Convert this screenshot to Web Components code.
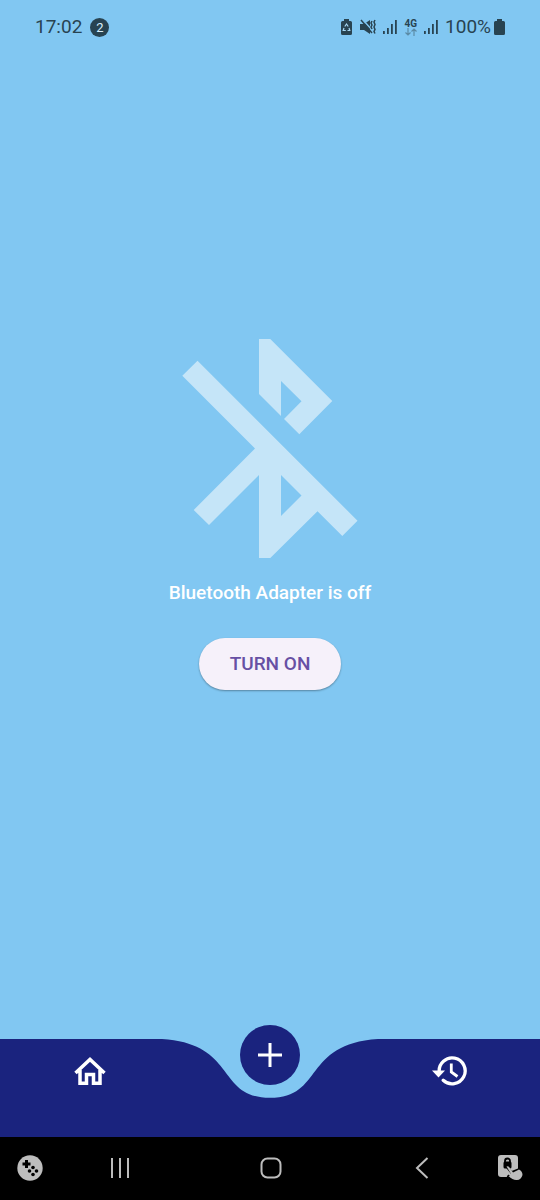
<!DOCTYPE html>
<html lang="en">
<head>
<meta charset="utf-8">
<meta name="viewport" content="width=device-width, initial-scale=1">
<title>Bluetooth</title>
<style>
html, body { margin: 0; }
body { background: #81c7f2; font-family: Roboto, sans-serif; }
</style>
</head>
<body>
<app-screen></app-screen>
<script>
const define = (name, html) => {
  const template = document.createElement('template');
  template.innerHTML = `<style>
    *, *::before { box-sizing: border-box; }
    svg { display: block; flex: none; }
    button { appearance: none; border: 0; margin: 0; padding: 0; background: none; font: inherit; color: inherit; cursor: pointer; }
  </style>` + html;
  customElements.define(name, class extends HTMLElement {
    constructor() {
      super();
      this.attachShadow({ mode: 'open' }).append(template.content.cloneNode(true));
    }
  });
};

define('signal-bars', `
  <style>:host { display: block; }</style>
  <svg width="14" height="14" fill="#284351" aria-hidden="true">
    <path d="M0 11h1.800v3H0zM4 8h1.800v6H4zM8 4h1.800v10H8zM12 0h1.800v14h-1.800z"/>
  </svg>`);

define('status-bar', `
  <style>
    :host { display: flex; align-items: center; justify-content: space-between; height: 54px; padding: 0 35px; color: #284351; font-size: 19px; line-height: 24px; }
    .group { display: flex; align-items: center; }
    .left { gap: 8px; }
    .count { display: grid; place-items: center; width: 19px; height: 19px; border-radius: 50%; background: #284351; color: #d9effc; font-size: 13px; line-height: 19px; }
    .right { gap: 7px; }
    .net { display: flex; flex-direction: column; align-items: center; font-size: 10px; font-weight: 700; line-height: 9px; }
    .power { display: flex; align-items: center; gap: 3px; }
    .modes { display: flex; align-items: center; gap: 8px; }
  </style>
  <div class="group left"><span>17:02</span><span class="count">2</span></div>
  <div class="group right">
    <span class="modes">
      <svg width="11" height="16" viewBox="0 0 11 16" aria-hidden="true">
        <path fill="#284351" d="M3 0h5v2h1.500q1.500 0 1.500 1.500v11q0 1.500-1.500 1.500h-8Q0 16 0 14.500v-11Q0 2 1.500 2H3z"/>
        <path fill="none" stroke="#a6d7f4" stroke-width="1.200" d="M3.800 7.500 5.500 5l1.700 2.500M8 9l.8 2.500H6.500M4.800 11.500H2.200L3 9"/>
      </svg>
      <svg width="16" height="16" viewBox="0 0 16 16" aria-hidden="true">
        <path fill="#284351" d="M0 5h4l6-4v14l-6-4H0z"/>
        <path d="M2 0l11 12" stroke="#81c7f2" stroke-width="1.500"/>
        <path d="M1 1l11 13M12 2l-1 2 1 2-1 2 1 2M15 1l-1 2 1 2.500-1 2.500 1 2.500-1 2 1 2" fill="none" stroke="#284351" stroke-width="1.500"/>
      </svg>
    </span>
    <signal-bars></signal-bars>
    <span class="net">4G
      <svg width="12" height="8" viewBox="0 0 12 8" fill="none" stroke="#5b8ba6" stroke-width="1.200" aria-hidden="true"><path d="M3 0v7M0.500 4.500 3 7l2.500-2.500M9 8V1M6.500 3.500 9 1l2.500 2.500"/></svg>
    </span>
    <signal-bars></signal-bars>
    <span class="power">100%
      <svg width="11" height="16" viewBox="0 0 11 16" fill="#284351" aria-hidden="true"><path d="M3 0h5v2h1.500q1.500 0 1.500 1.500v11q0 1.500-1.500 1.500h-8Q0 16 0 14.500v-11Q0 2 1.500 2H3z"/></svg>
    </span>
  </div>`);

define('pill-button', `
  <style>
    :host { display: block; }
    button { height: 52px; padding: 0 31px; border-radius: 26px; background: #f6f1fa; color: #6750a4; font-size: 19px; font-weight: 500; line-height: 24px; box-shadow: 0 1px 2px #0005; }
  </style>
  <button type="button"><slot></slot></button>`);

define('adapter-notice', `
  <style>
    :host { display: flex; flex-direction: column; align-items: center; }
    h1 { margin: 23px 0 33px; color: #fff; font-size: 19px; font-weight: 500; line-height: 24px; text-align: center; }
  </style>
  <svg width="176" height="220" viewBox="182 338 176 220" fill="#c5e5f8" aria-hidden="true">
    <path d="M259 339H270.300L332.300 401 299.300 434.300 284 419 301.500 401.300 281 381V416L259 394Z"/>
    <path fill-rule="evenodd" d="M197.500 360.700 357.500 520.700 342.300 536 317.500 511.300 270.300 558H259V475L209 525 193.700 510 255 448.500 182.300 375.700ZM281 475V516L301.500 495.500Z"/>
  </svg>
  <h1><slot></slot></h1>
  <slot name="action"></slot>`);

define('tab-bar', `
  <style>
    :host { display: block; position: relative; height: 98px; color: #fff; }
    .shape { display: flex; height: 100%; }
    .shape span { flex: 1; background: #1a237e; }
    nav { position: absolute; inset: 0; display: grid; grid-template-columns: repeat(3, 1fr); justify-items: center; align-items: start; }
    .tab { display: grid; place-items: center; width: 64px; height: 64px; }
    .add { display: grid; place-items: center; width: 60px; height: 60px; margin-top: -14px; border-radius: 50%; background: #1a237e; }
  </style>
  <div class="shape">
    <span></span>
    <svg width="216" height="98" viewBox="0 0 216 98" fill="#1a237e" aria-hidden="true"><path d="M0 0C75.600 4.900 54 58.800 108 58.800S140.400 4.900 216 0V98H0Z"/></svg>
    <span></span>
  </div>
  <nav aria-label="Main">
    <button class="tab" type="button" aria-label="Home">
      <svg width="32" height="30" viewBox="0 0 32 30" fill="none" stroke="currentColor" stroke-width="3.500"><path d="M1.500 17 16 3.500 30.500 17M6 14V27.200H12.500V18.500H19.500V27.200H26V14"/></svg>
    </button>
    <button class="add" type="button" aria-label="Add">
      <svg width="24" height="24" viewBox="0 0 24 24" fill="currentColor"><path d="M10.500 0h3v10.500H24v3H13.500V24h-3V13.500H0v-3h10.500z"/></svg>
    </button>
    <button class="tab" type="button" aria-label="History">
      <svg width="36" height="32" viewBox="0 0 36 32" fill="none" stroke="currentColor" stroke-width="3.300"><path d="M7.200 17A13 13 0 1 1 11.200 25.300" stroke-linecap="round"/><path d="M0 15.500H13L6.500 22.500Z" fill="currentColor" stroke="none"/><path d="M19.300 8.500V17L25.500 21.500" stroke-width="2.800"/></svg>
    </button>
  </nav>`);

define('system-bar', `
  <style>
    :host { box-sizing: border-box; display: grid; grid-template-columns: 28px 1fr 1fr 1fr 26px; justify-items: center; align-items: center; height: 63px; padding: 0 17px 2px; background: #000; }
    button { display: grid; place-items: center; width: 48px; height: 48px; }
    .side { width: 26px; justify-self: start; }
  </style>
  <button class="side" type="button" aria-label="Game tools">
    <svg width="26" height="26" viewBox="0 0 26 26"><circle cx="13" cy="13" r="12.700" fill="#bdbdbd"/><path d="M9.500 5v8M5.500 9h8" stroke="#000" stroke-width="3"/><g fill="#000"><circle cx="16" cy="12.500" r="1.800"/><circle cx="12.500" cy="16" r="1.800"/><circle cx="19.500" cy="16" r="1.800"/><circle cx="16" cy="19.500" r="1.800"/></g></svg>
  </button>
  <button type="button" aria-label="Recent apps">
    <svg width="20" height="20" viewBox="0 0 20 20" fill="#bdbdbd"><path d="M1 0h2v20H1zM9 0h2v20H9zM17 0h2v20h-2z"/></svg>
  </button>
  <button type="button" aria-label="Home screen">
    <svg width="22" height="22" viewBox="0 0 22 22" fill="none" stroke="#bdbdbd" stroke-width="2"><rect x="1.500" y="1.500" width="19" height="19" rx="6"/></svg>
  </button>
  <button type="button" aria-label="Back">
    <svg width="14" height="22" viewBox="0 0 14 22" fill="none" stroke="#bdbdbd" stroke-width="2"><path d="M12.500 1 2 11l10.500 10"/></svg>
  </button>
  <button class="side" type="button" aria-label="Touch lock">
    <svg width="26" height="26" viewBox="0 0 26 26"><rect x="1" y="0" width="20" height="22" rx="3" fill="#bdbdbd"/><path d="M8 7V6a2.500 2.500 0 0 1 5 0v1" fill="none" stroke="#000" stroke-width="1.800"/><rect x="6.500" y="6.500" width="8" height="7" rx="1.500" fill="#000"/><path d="M10 12 14.500 17.500 23 14 25.500 18 24 24 16 25 10.500 20.500" fill="#bdbdbd" stroke="#000" stroke-width="2.500"/><path d="M9.500 11.500Q11 10.500 12.500 12.500L16 17.500 22 14.500Q25.500 16 25.500 20 24 25 20 25 16 25.500 11.500 21L15 20.500Z" fill="#bdbdbd"/></svg>
  </button>`);

define('app-screen', `
  <style>
    :host { display: flex; flex-direction: column; min-height: 100vh; background: #81c7f2; }
    main { flex: 1; display: flex; flex-direction: column; justify-content: center; padding-bottom: 66px; }
  </style>
  <status-bar></status-bar>
  <main>
    <adapter-notice>Bluetooth Adapter is off<pill-button slot="action">TURN ON</pill-button></adapter-notice>
  </main>
  <tab-bar></tab-bar>
  <system-bar></system-bar>`);
</script>
</body>
</html>
